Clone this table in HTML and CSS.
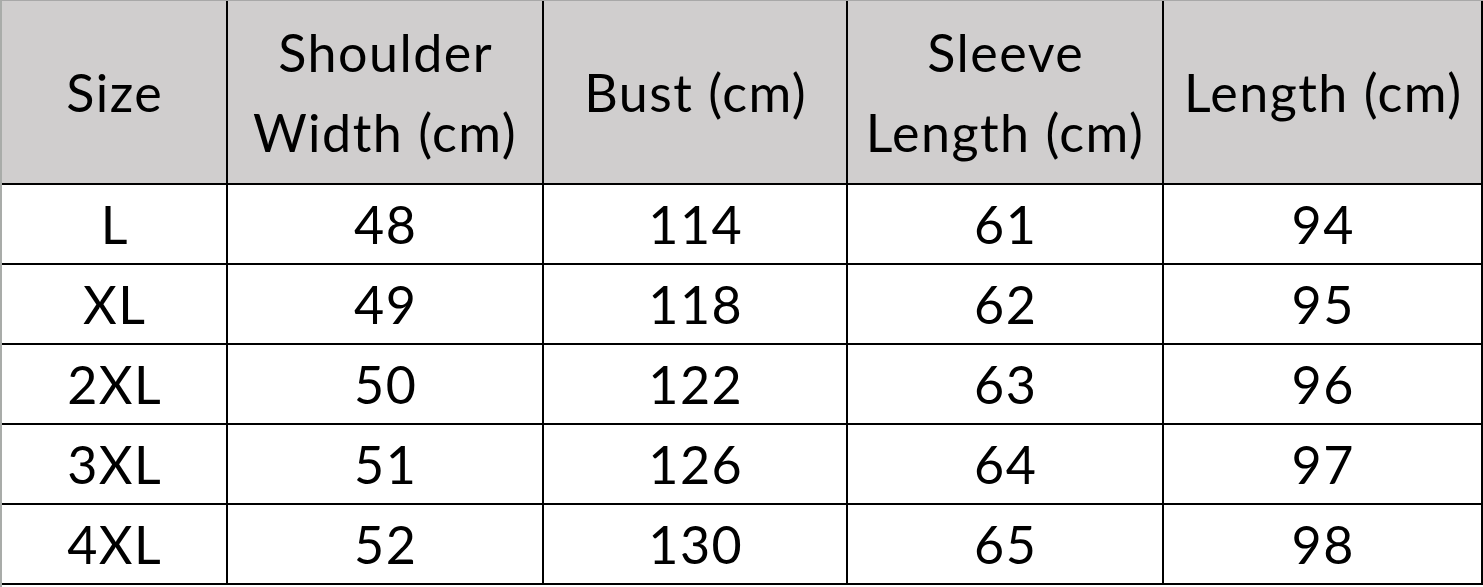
FILE: index.html
```html
<!DOCTYPE html>
<html lang="en">
<head>
<meta charset="utf-8">
<title>Size Chart</title>
<link rel="stylesheet" href="styles.css">
</head>
<body>
<div class="sheet">
  <table class="chart">
    <colgroup>
      <col class="c-size">
      <col class="c-shoulder">
      <col class="c-bust">
      <col class="c-sleeve">
      <col class="c-length">
    </colgroup>
    <thead>
      <tr>
        <th>Size</th>
        <th>Shoulder<br>Width (cm)</th>
        <th>Bust (cm)</th>
        <th>Sleeve<br>Length (cm)</th>
        <th>Length (cm)</th>
      </tr>
    </thead>
    <tbody>
      <tr><td>L</td><td>48</td><td>114</td><td>61</td><td>94</td></tr>
      <tr><td>XL</td><td>49</td><td>118</td><td>62</td><td>95</td></tr>
      <tr><td>2XL</td><td>50</td><td>122</td><td>63</td><td>96</td></tr>
      <tr><td>3XL</td><td>51</td><td>126</td><td>64</td><td>97</td></tr>
      <tr><td>4XL</td><td>52</td><td>130</td><td>65</td><td>98</td></tr>
    </tbody>
  </table>
</div>
</body>
</html>
```

FILE: styles.css
```css
html, body {
  margin: 0;
  padding: 0;
  background: #ffffff;
}

.sheet {
  width: 1483px;
  height: 587px;
  box-sizing: border-box;
  border-top: 1px solid #a8a8a8;
  border-left: 2px solid #a9aca9;
  overflow: hidden;
}

.chart {
  border-collapse: collapse;
  table-layout: fixed;
  width: 1480px;
  font-family: Lato, "Liberation Sans", sans-serif;
  color: #000;
}

.c-size { width: 225px; }
.c-shoulder { width: 316px; }
.c-bust { width: 304px; }
.c-sleeve { width: 316px; }
.c-length { width: 319px; }

.chart th,
.chart td {
  padding: 0;
  text-align: center;
  vertical-align: middle;
  border: 2px solid #000;
  font-weight: 400;
  font-size: 52px;
  letter-spacing: 1.5px;
  text-indent: 1.5px;
}

.chart tr > :first-child { border-left: none; }

.chart thead th {
  border-top: none;
  background: #d0cece;
  height: 182px;
  line-height: 80px;
}

.chart tbody td {
  height: 78px;
  line-height: 78px;
}
```
